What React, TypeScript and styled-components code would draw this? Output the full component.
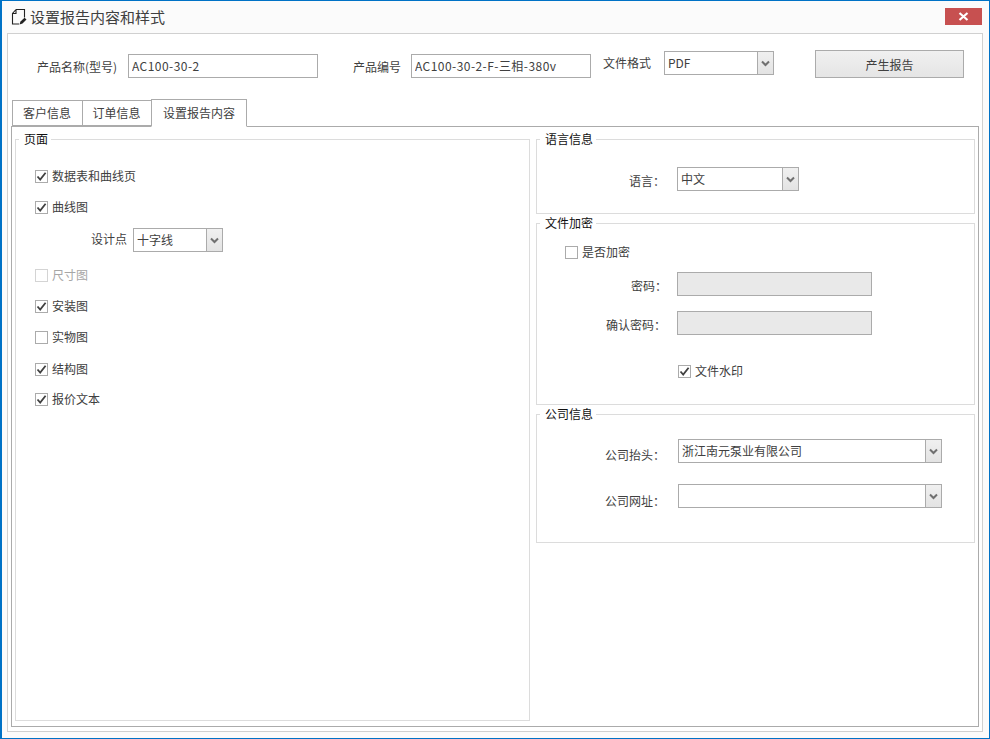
import React from 'react';
import styled, { createGlobalStyle } from 'styled-components';

const GlobalStyle = createGlobalStyle`
  html, body {
    margin: 0;
    padding: 0;
    background: #fff;
  }
  body {
    font-family: "Noto Sans CJK SC", sans-serif;
    font-size: 12px;
    color: #404040;
  }
`;

const Window = styled.div`
  box-sizing: border-box;
  width: 990px;
  height: 739px;
  display: flex;
  flex-direction: column;
  background: #fbfbfb;
  border: 1px solid #0072c6;
  border-left-width: 2px;
  overflow: hidden;
`;

const TitleBar = styled.div`
  flex: none;
  height: 32px;
  display: flex;
  align-items: flex-start;
  padding: 0 6px 0 9px;
`;

const TitleIcon = styled.svg`
  width: 16px;
  height: 17px;
  margin-top: 7px;
  flex: none;
`;

const TitleText = styled.div`
  margin: 4px 0 0 3px;
  font-size: 15px;
  line-height: 24px;
  color: #404040;
  flex: 1;
`;

const CloseButton = styled.div`
  width: 37px;
  height: 17px;
  margin-top: 7px;
  margin-left: -1px;
  margin-right: 1px;
  background: #c75050;
  display: flex;
  align-items: center;
  justify-content: center;
`;

const Panel = styled.div`
  flex: 1;
  min-height: 0;
  display: flex;
  flex-direction: column;
  margin: 0 6px 6px 5px;
  padding: 0 3px 4px;
  background: #fff;
  border: 1px solid #d0d0d0;
`;

const TopForm = styled.div`
  flex: none;
  height: 65px;
  box-sizing: border-box;
  padding-top: 16px;
  display: flex;
  align-items: flex-start;
`;

const TopLabel = styled.div<{ $left: number; $top: number; $width: number }>`
  margin-left: ${(p) => p.$left}px;
  margin-top: ${(p) => p.$top}px;
  width: ${(p) => p.$width}px;
  line-height: 18px;
  white-space: nowrap;
`;

const TextBox = styled.input<{ $width: number; $left?: number; $top?: number }>`
  box-sizing: border-box;
  width: ${(p) => p.$width}px;
  height: 24px;
  margin: ${(p) => p.$top ?? 0}px 0 0 ${(p) => p.$left ?? 0}px;
  padding: 0 3px 2px;
  border: 1px solid #ababab;
  border-radius: 0;
  outline: none;
  background: ${(p) => (p.disabled ? '#e9e9e9' : '#fff')};
  font: inherit;
  letter-spacing: 0.45px;
  color: #404040;
  display: block;
`;

const ReportButton = styled.button`
  box-sizing: border-box;
  width: 149px;
  height: 28px;
  margin-left: 41px;
  padding: 0;
  border: 1px solid #ababab;
  background: linear-gradient(#f0f0f0, #e5e5e5);
  font: inherit;
  color: #404040;
`;

const Combo = styled.div<{ $width: number; $left?: number; $top?: number }>`
  box-sizing: border-box;
  width: ${(p) => p.$width}px;
  height: 24px;
  flex: none;
  margin: ${(p) => p.$top ?? 0}px 0 0 ${(p) => p.$left ?? 0}px;
  display: flex;
  background: #fff;
  border: 1px solid #ababab;
`;

const ComboValue = styled.div`
  flex: 1;
  padding: 1px 0 0 3px;
  line-height: 20px;
  color: #404040;
  white-space: nowrap;
`;

const ComboArrow = styled.div`
  width: 15px;
  flex: none;
  border-left: 1px solid #ababab;
  background: linear-gradient(#f0f0f0, #e3e3e3);
  display: flex;
  align-items: center;
  justify-content: center;
`;

const TabStrip = styled.div`
  flex: none;
  height: 27px;
  display: flex;
  align-items: flex-end;
  position: relative;
  z-index: 1;
  padding-left: 1px;
`;

const Tab = styled.div<{ $active?: boolean; $width: number }>`
  box-sizing: border-box;
  width: ${(p) => p.$width}px;
  height: ${(p) => (p.$active ? 28 : 26)}px;
  margin-bottom: ${(p) => (p.$active ? -1 : 0)}px;
  margin-right: -1px;
  padding-right: ${(p) => (p.$active ? 0 : 1)}px;
  border: 1px solid #ababab;
  border-bottom-color: ${(p) => (p.$active ? '#fff' : '#ababab')};
  background: #fff;
  text-align: center;
  line-height: ${(p) => (p.$active ? 26 : 23)}px;
  color: #404040;
`;

const TabBody = styled.div`
  flex: 1;
  min-height: 0;
  display: flex;
  gap: 6px;
  padding: 12px 3px 5px;
  border: 1px solid #ababab;
`;

const LeftColumn = styled.div`
  width: 515px;
  flex: none;
  display: flex;
`;

const RightColumn = styled.div`
  flex: 1;
  display: flex;
  flex-direction: column;
  gap: 9px;
`;

const Group = styled.div<{ $height?: number }>`
  box-sizing: border-box;
  position: relative;
  flex: ${(p) => (p.$height ? 'none' : 1)};
  height: ${(p) => (p.$height ? `${p.$height}px` : 'auto')};
  border: 1px solid #dcdcdc;
`;

const Legend = styled.div`
  position: absolute;
  top: -8px;
  left: 3px;
  padding: 0 3px 0 5px;
  background: #fff;
  line-height: 14px;
  color: #111;
`;

const GroupBody = styled.div<{ $pad: string }>`
  padding: ${(p) => p.$pad};
  display: flex;
  flex-direction: column;
  align-items: flex-start;
`;

const CheckRow = styled.div<{ $top?: number; $left?: number; $disabled?: boolean }>`
  height: 20px;
  margin: ${(p) => p.$top ?? 0}px 0 0 ${(p) => p.$left ?? 0}px;
  display: flex;
  align-items: center;
  gap: 4px;
  color: ${(p) => (p.$disabled ? '#a6a6a6' : '#404040')};
`;

const CheckText = styled.span`
  line-height: 20px;
`;

const CheckBox = styled.div<{ $disabled?: boolean }>`
  box-sizing: border-box;
  width: 13px;
  height: 13px;
  flex: none;
  border: 1px solid ${(p) => (p.$disabled ? '#d4d4d4' : '#ababab')};
  background: #fff;
  display: flex;
  align-items: center;
  justify-content: center;
`;

const FieldRow = styled.div<{ $top?: number }>`
  display: flex;
  align-items: center;
  height: 24px;
  margin-top: ${(p) => p.$top ?? 0}px;
`;

const FieldLabel = styled.div<{ $width: number; $gap: number; $drop: number }>`
  width: ${(p) => p.$width}px;
  margin-right: ${(p) => p.$gap}px;
  padding-top: ${(p) => Math.max(p.$drop, 0) * 2}px;
  padding-bottom: ${(p) => Math.max(-p.$drop, 0) * 2}px;
  text-align: right;
  white-space: nowrap;
  flex: none;
  color: #404040;
`;

function Chevron() {
  return (
    <svg width="9" height="7" viewBox="0 0 9 7">
      <path d="M1 1.5 L4.5 5 L8 1.5" fill="none" stroke="#707070" strokeWidth="2" />
    </svg>
  );
}

function Select({ value, width, left, top }: { value?: string; width: number; left?: number; top?: number }) {
  return (
    <Combo $width={width} $left={left} $top={top}>
      <ComboValue>{value}</ComboValue>
      <ComboArrow>
        <Chevron />
      </ComboArrow>
    </Combo>
  );
}

function Check({
  label,
  checked,
  disabled,
  top,
  left,
}: {
  label: string;
  checked?: boolean;
  disabled?: boolean;
  top?: number;
  left?: number;
}) {
  return (
    <CheckRow $top={top} $left={left} $disabled={disabled}>
      <CheckBox $disabled={disabled}>
        {checked && (
          <svg width="11" height="11" viewBox="0 0 11 11">
            <path d="M1.5 5.5 L4.2 8.6 L9.6 1.8" fill="none" stroke="#404040" strokeWidth="1.8" />
          </svg>
        )}
      </CheckBox>
      <CheckText>{label}</CheckText>
    </CheckRow>
  );
}

export default function App() {
  return (
    <>
      <GlobalStyle />
      <Window>
        <TitleBar>
          <TitleIcon viewBox="0 0 16 17">
            <path
              d="M5 1.5 H13.5 V9.5 M5 1.5 L1.5 5.5 V16 H8 M1.5 5.5 H5 V1.5"
              fill="none"
              stroke="#222"
              strokeWidth="1.1"
            />
            <path d="M8.5 16.5 L9.5 13.5 L13.5 9.8 L15.5 11.6 L11.5 15.5 Z" fill="#222" />
          </TitleIcon>
          <TitleText>设置报告内容和样式</TitleText>
          <CloseButton>
            <svg width="11" height="9" viewBox="0 0 11 9">
              <path d="M1.5 1 L9.5 8 M9.5 1 L1.5 8" stroke="#fff" strokeWidth="2.2" fill="none" />
            </svg>
          </CloseButton>
        </TitleBar>
        <Panel>
          <TopForm>
            <TopLabel $left={26} $top={8} $width={80}>产品名称(型号)</TopLabel>
            <TextBox $width={190} $left={11} $top={4} value="AC100-30-2" readOnly />
            <TopLabel $left={35} $top={8} $width={48}>产品编号</TopLabel>
            <TextBox $width={180} $left={10} $top={4} value="AC100-30-2-F-三相-380v" readOnly />
            <TopLabel $left={12} $top={4} $width={48}>文件格式</TopLabel>
            <Select value="PDF" width={110} left={13} top={1} />
            <ReportButton>产生报告</ReportButton>
          </TopForm>
          <TabStrip>
            <Tab $width={71}>客户信息</Tab>
            <Tab $width={70}>订单信息</Tab>
            <Tab $active $width={96}>设置报告内容</Tab>
          </TabStrip>
          <TabBody>
            <LeftColumn>
              <Group>
                <Legend>页面</Legend>
                <GroupBody $pad="26px 0 0 19px">
                  <Check label="数据表和曲线页" checked />
                  <Check label="曲线图" checked top={11} />
                  <FieldRow $top={11}>
                    <FieldLabel $width={92} $gap={6} $drop={-2}>设计点</FieldLabel>
                    <Select value="十字线" width={90} />
                  </FieldRow>
                  <Check label="尺寸图" disabled top={13} />
                  <Check label="安装图" checked top={11} />
                  <Check label="实物图" top={11} />
                  <Check label="结构图" checked top={12} />
                  <Check label="报价文本" checked top={10} />
                </GroupBody>
              </Group>
            </LeftColumn>
            <RightColumn>
              <Group $height={75}>
                <Legend>语言信息</Legend>
                <GroupBody $pad="27px 0 0 0">
                  <FieldRow>
                    <FieldLabel $width={128} $gap={12} $drop={1}>语言：</FieldLabel>
                    <Select value="中文" width={122} />
                  </FieldRow>
                </GroupBody>
              </Group>
              <Group $height={182}>
                <Legend>文件加密</Legend>
                <GroupBody $pad="18px 0 0 0">
                  <Check label="是否加密" left={28} />
                  <FieldRow $top={10}>
                    <FieldLabel $width={130} $gap={10} $drop={1}>密码：</FieldLabel>
                    <TextBox $width={195} disabled />
                  </FieldRow>
                  <FieldRow $top={15}>
                    <FieldLabel $width={129} $gap={11} $drop={1}>确认密码：</FieldLabel>
                    <TextBox $width={195} disabled />
                  </FieldRow>
                  <Check label="文件水印" checked left={141} top={26} />
                </GroupBody>
              </Group>
              <Group $height={129}>
                <Legend>公司信息</Legend>
                <GroupBody $pad="24px 0 0 0">
                  <FieldRow>
                    <FieldLabel $width={128} $gap={13} $drop={3}>公司抬头：</FieldLabel>
                    <Select value="浙江南元泵业有限公司" width={264} />
                  </FieldRow>
                  <FieldRow $top={21}>
                    <FieldLabel $width={128} $gap={13} $drop={4}>公司网址：</FieldLabel>
                    <Select width={264} />
                  </FieldRow>
                </GroupBody>
              </Group>
            </RightColumn>
          </TabBody>
        </Panel>
      </Window>
    </>
  );
}
